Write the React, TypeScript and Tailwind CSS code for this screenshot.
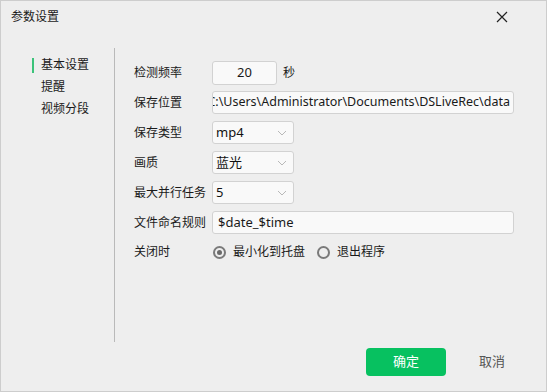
import React from "react";

const font = { fontFamily: '"Segoe UI", "Noto Sans", "Noto Sans CJK SC", sans-serif' };

function Chevron() {
  return (
    <svg width="10" height="6" viewBox="0 0 10 6" className="shrink-0">
      <path d="M1 1l4 4 4-4" fill="none" stroke="#b8b8b8" strokeWidth="1" />
    </svg>
  );
}

function Select({ value }: { value: string }) {
  return (
    <div className="flex h-[23px] w-[82px] items-center justify-between rounded-[3px] border border-[#d2d2d2] bg-[#f9f9f9] pl-[3px] pr-[6px] text-[13px] text-[#111]">
      <span>{value}</span>
      <Chevron />
    </div>
  );
}

function Radio({ checked, label }: { checked?: boolean; label: string }) {
  return (
    <div className="flex items-center gap-[7px]">
      <span className="flex h-[13px] w-[13px] items-center justify-center rounded-full border-2 border-[#7a7a7a]">
        {checked ? <span className="h-[5px] w-[5px] rounded-full bg-[#6a6a6a]" /> : null}
      </span>
      <span>{label}</span>
    </div>
  );
}

function Row({ label, children }: { label: string; children: React.ReactNode }) {
  return (
    <div className="flex h-[23px] items-center">
      <div className="w-[78px] shrink-0">{label}</div>
      {children}
    </div>
  );
}

export default function App() {
  return (
    <div
      className="flex h-[392px] w-[547px] flex-col border border-[#cdcdcd] bg-[#eeeeee] text-[12px] text-[#1a1a1a]"
      style={font}
    >
      <div className="flex h-[47px] shrink-0 items-start justify-between pl-[10px] pr-[38px] pt-[7px]">
        <span>参数设置</span>
        <svg width="12" height="12" viewBox="0 0 12 12" className="mt-[3px]">
          <path d="M1 1l10 10M11 1L1 11" stroke="#222" strokeWidth="1.2" />
        </svg>
      </div>

      <div className="flex h-[294px] shrink-0">
        <div className="w-[113px] shrink-0 pl-[31px] pt-[6px]">
          <div className="flex h-[22px] items-center">
            <span className="mr-[7px] h-[15px] w-[2px] bg-[#3cc37a]" />
            <span>基本设置</span>
          </div>
          <div className="flex h-[22px] items-center pl-[9px]">提醒</div>
          <div className="flex h-[22px] items-center pl-[9px]">视频分段</div>
        </div>
        <div className="w-px shrink-0 bg-[#b9b9b9]" />
        <div className="flex flex-1 flex-col gap-[7px] pl-[19px] pt-[13px]">
          <Row label="检测频率">
            <div className="flex h-[24px] w-[65px] items-center justify-center rounded-[3px] border border-[#d2d2d2] bg-[#f9f9f9] text-[13px]">
              20
            </div>
            <span className="ml-[6px]">秒</span>
          </Row>
          <Row label="保存位置">
            <div className="flex h-[23px] w-[302px] items-center justify-end overflow-hidden whitespace-nowrap rounded-[3px] border border-[#d2d2d2] bg-[#f9f9f9] pr-[3px] text-[12.5px]">
              C:\Users\Administrator\Documents\DSLiveRec\data
            </div>
          </Row>
          <Row label="保存类型">
            <Select value="mp4" />
          </Row>
          <Row label="画质">
            <Select value="蓝光" />
          </Row>
          <Row label="最大并行任务">
            <Select value="5" />
          </Row>
          <Row label="文件命名规则">
            <div className="flex h-[23px] w-[302px] items-center rounded-[3px] border border-[#d2d2d2] bg-[#f9f9f9] pl-[5px] text-[13px]">
              $date_$time
            </div>
          </Row>
          <div className="flex h-[22px] items-center">
            <div className="w-[78px] shrink-0">关闭时</div>
            <div className="flex items-center gap-[12px] pl-[1px]">
              <Radio checked label="最小化到托盘" />
              <Radio label="退出程序" />
            </div>
          </div>
        </div>
      </div>

      <div className="flex flex-1 items-start justify-end gap-[6px] pr-[14px] pt-[6px]">
        <button className="h-[28px] w-[80px] rounded-[4px] bg-[#07c160] text-[13px] text-white">确定</button>
        <button className="h-[28px] w-[80px] text-[13px] text-[#555]">取消</button>
      </div>
    </div>
  );
}
